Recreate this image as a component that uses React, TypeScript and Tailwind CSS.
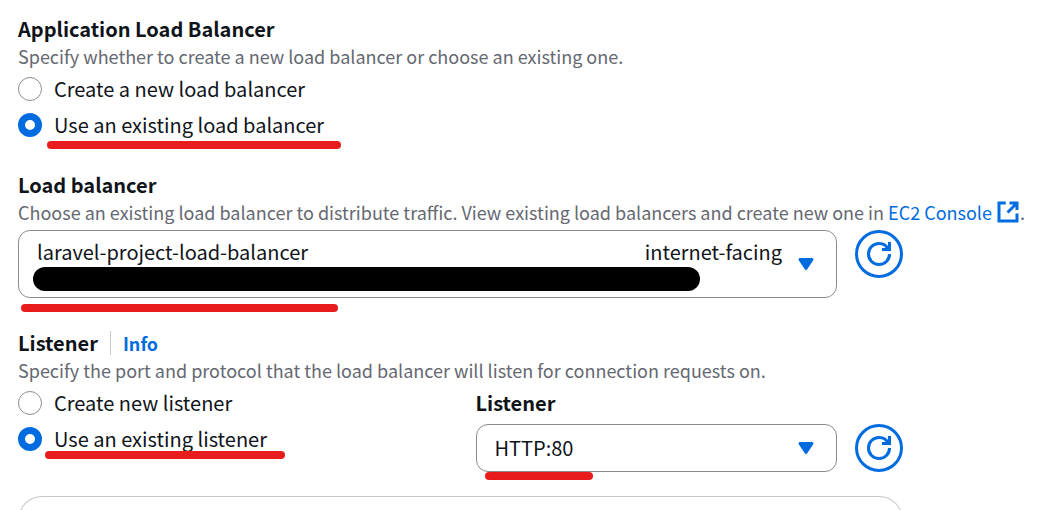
import { useState, type ReactNode } from "react";

function RefreshButton({ label }: { label: string }) {
  return (
    <button
      type="button"
      aria-label={label}
      className="flex size-12 shrink-0 items-center justify-center rounded-full border-3 border-[#006ce0] text-[#006ce0]"
    >
      <svg viewBox="0 0 16 16" className="size-6" fill="none" stroke="currentColor" strokeWidth="2" aria-hidden="true">
        <path d="M10 5h5V0" />
        <path d="M15 8a6.957 6.957 0 0 1-7 7 6.957 6.957 0 0 1-7-7 6.957 6.957 0 0 1 7-7 6.87 6.87 0 0 1 6.3 4" />
      </svg>
    </button>
  );
}

function Caret() {
  return (
    <svg
      viewBox="0 0 16 16"
      className="pointer-events-none size-6 shrink-0 text-[#006ce0]"
      fill="currentColor"
      stroke="currentColor"
      strokeWidth="2"
      strokeLinejoin="round"
      aria-hidden="true"
    >
      <path d="M4 5h8l-4 6-4-6Z" />
    </svg>
  );
}

function ExternalIcon() {
  return (
    <svg
      viewBox="0 0 16 16"
      className="inline-block size-6 align-top"
      fill="none"
      stroke="currentColor"
      strokeWidth="2"
      aria-hidden="true"
    >
      <path d="M9 2h5v4.700M7.700 8.300 14 2" />
      <path d="M14 9v5H2V2h4.500" />
    </svg>
  );
}

function Marker({ className }: { className: string }) {
  return <span aria-hidden="true" className={`pointer-events-none absolute h-2 rounded-full bg-[#e81c1c] ${className}`} />;
}

function Description({ children }: { children: ReactNode }) {
  return <p className="text-lg leading-6 text-[#656871]">{children}</p>;
}

type RadioProps = {
  name: string;
  label: string;
  checked: boolean;
  onSelect: () => void;
  marker?: ReactNode;
};

function Radio({ name, label, checked, onSelect, marker }: RadioProps) {
  return (
    <label className="relative flex w-fit items-center gap-3">
      <input
        type="radio"
        name={name}
        checked={checked}
        onChange={onSelect}
        className="size-6 shrink-0 appearance-none rounded-full border border-[#8c8c94] bg-white checked:border-7 checked:border-[#006ce0]"
      />
      <span>{label}</span>
      {marker}
    </label>
  );
}

export default function App() {
  const [balancer, setBalancer] = useState("existing");
  const [listener, setListener] = useState("existing");

  return (
    <main className="h-screen overflow-hidden bg-white px-[18px] pt-[14px] font-['Noto_Sans_CJK_SC',sans-serif] text-xl leading-[30px] text-[#0f141a]">
      <section>
        <h2 className="font-bold">Application Load Balancer</h2>
        <Description>Specify whether to create a new load balancer or choose an existing one.</Description>
        <div className="mt-[6px] flex flex-col gap-[6px]">
          <Radio
            name="balancer"
            label="Create a new load balancer"
            checked={balancer === "new"}
            onSelect={() => setBalancer("new")}
          />
          <Radio
            name="balancer"
            label="Use an existing load balancer"
            checked={balancer === "existing"}
            onSelect={() => setBalancer("existing")}
            marker={<Marker className="top-[31px] left-[29px] w-[294px]" />}
          />
        </div>
      </section>

      <section className="mt-[30px]">
        <h2 id="balancer-label" className="font-bold">
          Load balancer
        </h2>
        <Description>
          Choose an existing load balancer to distribute traffic. View existing load balancers and create new one in{" "}
          <a href="#ec2" className="text-[#006ce0]">
            EC2 Console <ExternalIcon />
          </a>
          .
        </Description>
        <div className="mt-[6px] mr-[133px] flex items-start gap-[18px]">
          <div className="relative flex-1">
            <button
              type="button"
              aria-haspopup="listbox"
              aria-labelledby="balancer-label balancer-value"
              className="flex h-[68px] w-full items-center gap-3 rounded-xl border border-[#8c8c94] px-[18px] text-left"
            >
              <span id="balancer-value" className="flex flex-1 flex-col">
                <span className="flex justify-between">
                  <span>laravel-project-load-balancer</span>
                  <span>internet-facing</span>
                </span>
                <span className="-mx-1 mr-[82px] h-6 rounded-full bg-black" />
              </span>
              <Caret />
            </button>
            <Marker className="top-[74px] left-[3px] w-[317px]" />
          </div>
          <RefreshButton label="Refresh load balancers" />
        </div>
      </section>

      <section className="mt-[30px]">
        <div className="flex items-center">
          <h2 className="font-bold">Listener</h2>
          <a href="#info" className="ml-3 border-l border-[#c6c6cd] pl-3 text-lg leading-6 font-bold text-[#006ce0]">
            Info
          </a>
        </div>
        <Description>Specify the port and protocol that the load balancer will listen for connection requests on.</Description>
        <div className="mt-[6px] mr-[133px] grid grid-cols-2 gap-x-[30px]">
          <div className="flex flex-col gap-[6px]">
            <Radio
              name="listener"
              label="Create new listener"
              checked={listener === "new"}
              onSelect={() => setListener("new")}
            />
            <Radio
              name="listener"
              label="Use an existing listener"
              checked={listener === "existing"}
              onSelect={() => setListener("existing")}
              marker={<Marker className="top-[27px] left-[27px] w-[240px]" />}
            />
          </div>
          <div>
            <label htmlFor="port" className="block font-bold">
              Listener
            </label>
            <div className="mt-[6px] flex gap-[18px]">
              <div className="relative grid flex-1 items-center">
                <select
                  id="port"
                  className="col-start-1 row-start-1 h-12 w-full appearance-none rounded-xl border border-[#8c8c94] bg-white px-[18px]"
                >
                  <option>HTTP:80</option>
                </select>
                <span className="pointer-events-none col-start-1 row-start-1 mr-[19px] flex justify-self-end">
                  <Caret />
                </span>
                <Marker className="top-12 left-[9px] w-[108px]" />
              </div>
              <RefreshButton label="Refresh listeners" />
            </div>
          </div>
        </div>
      </section>

      <div className="mt-6 mr-[133px] h-12 rounded-t-3xl border border-b-0 border-[#c6c6cd]" />
    </main>
  );
}
